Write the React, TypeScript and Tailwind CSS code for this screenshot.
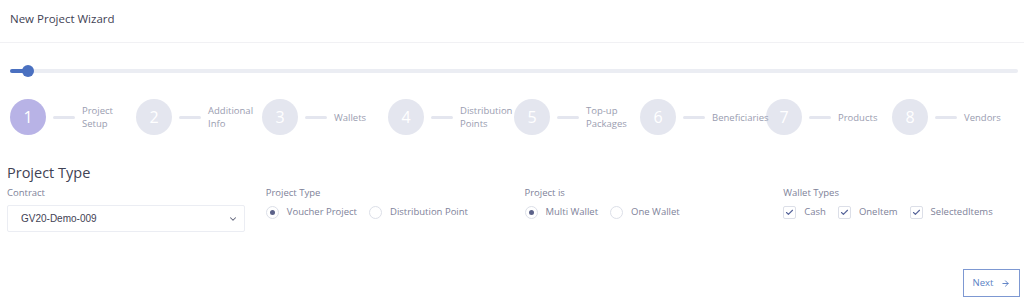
import { ChevronDown, ArrowRight, Check } from 'lucide-react';

const steps = [
  { n: 1, label: ['Project', 'Setup'] },
  { n: 2, label: ['Additional', 'Info'] },
  { n: 3, label: ['Wallets'] },
  { n: 4, label: ['Distribution', 'Points'] },
  { n: 5, label: ['Top-up', 'Packages'] },
  { n: 6, label: ['Beneficiaries'] },
  { n: 7, label: ['Products'] },
  { n: 8, label: ['Vendors'] },
];

function Radio({ label, checked }: { label: string; checked?: boolean }) {
  return (
    <label className="flex items-center">
      <span className="flex h-[13px] w-[13px] items-center justify-center rounded-full border border-[#dcdfe8] bg-white">
        {checked && <span className="h-[5px] w-[5px] rounded-full bg-[#5c6289]" />}
      </span>
      <span className="ml-[8px] text-[9.5px] text-[#7e8299]">{label}</span>
    </label>
  );
}

function CheckBox({ label }: { label: string }) {
  return (
    <label className="flex items-center">
      <span className="flex h-[13px] w-[13px] items-center justify-center rounded-[2px] border border-[#dcdfe8] bg-white">
        <Check className="h-[9px] w-[9px] text-[#56649a]" strokeWidth={3} />
      </span>
      <span className="ml-[8px] text-[9.5px] text-[#7e8299]">{label}</span>
    </label>
  );
}

export default function App() {
  return (
    <div className="h-[301px] w-full overflow-hidden bg-white font-['Open_Sans',sans-serif]">
      <div className="flex h-[43px] items-center border-b border-[#f1f1f4] px-[10px] pb-[4px]">
        <h1 className="text-[11.5px] font-medium text-[#3f4254]">New Project Wizard</h1>
      </div>

      <div className="mt-[26px] pl-[10px] pr-[6px]">
        <div className="relative h-[4px] rounded-full bg-[#ebedf3]">
          <div className="h-[4px] w-[18px] rounded-full bg-[#4a70c0]" />
          <div className="absolute left-[12px] top-[-4px] h-[12px] w-[12px] rounded-full bg-[#4a70c0]" />
        </div>
      </div>

      <div className="mt-[26px] grid grid-cols-8 pl-[10px] pr-[6px]">
        {steps.map((s) => (
          <div key={s.n} className="flex items-center">
            <div
              className={`flex h-[36px] w-[36px] shrink-0 items-center justify-center rounded-full text-[16px] text-white ${
                s.n === 1 ? 'bg-[#b8b3e6]' : 'bg-[#e4e6ef]'
              }`}
            >
              {s.n}
            </div>
            <div className="ml-[7px] h-[3px] w-[22px] shrink-0 rounded-full bg-[#e4e6ef]" />
            <div className="relative z-10 ml-[7px] whitespace-nowrap text-[9.5px] leading-[13px] text-[#9a9db0]">
              {s.label.map((l) => (
                <div key={l}>{l}</div>
              ))}
            </div>
          </div>
        ))}
      </div>

      <h2 className="mt-[28px] pl-[7px] text-[14.5px] font-medium leading-[20px] text-[#3f4254]">Project Type</h2>

      <div className="mt-[3px] grid grid-cols-4 gap-x-[21px] pl-[7px] pr-[3px]">
        <div>
          <div className="text-[9.5px] leading-[14px] text-[#7e8299]">Contract</div>
          <div className="mt-[5px] flex h-[27px] items-center justify-between rounded-[2px] border border-[#ebedf3] pl-[13px] pr-[6px]">
            <span className="font-['Liberation_Sans',sans-serif] text-[10px] text-[#3f4254]">GV20-Demo-009</span>
            <ChevronDown className="h-[10px] w-[10px] text-[#5e6278]" strokeWidth={2.5} />
          </div>
        </div>
        <div>
          <div className="text-[9.5px] leading-[14px] text-[#7e8299]">Project Type</div>
          <div className="mt-[5px] flex gap-[12px]">
            <Radio label="Voucher Project" checked />
            <Radio label="Distribution Point" />
          </div>
        </div>
        <div>
          <div className="text-[9.5px] leading-[14px] text-[#7e8299]">Project is</div>
          <div className="mt-[5px] flex gap-[12px]">
            <Radio label="Multi Wallet" checked />
            <Radio label="One Wallet" />
          </div>
        </div>
        <div>
          <div className="text-[9.5px] leading-[14px] text-[#7e8299]">Wallet Types</div>
          <div className="mt-[5px] flex gap-[12px]">
            <CheckBox label="Cash" />
            <CheckBox label="OneItem" />
            <CheckBox label="SelectedItems" />
          </div>
        </div>
      </div>

      <div className="mt-[37px] flex justify-end pr-[4px]">
        <button className="flex h-[28px] w-[57px] items-center justify-center gap-[8px] border border-[#7d98d2] text-[9.5px] text-[#5b7fc4]">
          Next
          <ArrowRight className="h-[9px] w-[9px]" strokeWidth={2.5} />
        </button>
      </div>
    </div>
  );
}
